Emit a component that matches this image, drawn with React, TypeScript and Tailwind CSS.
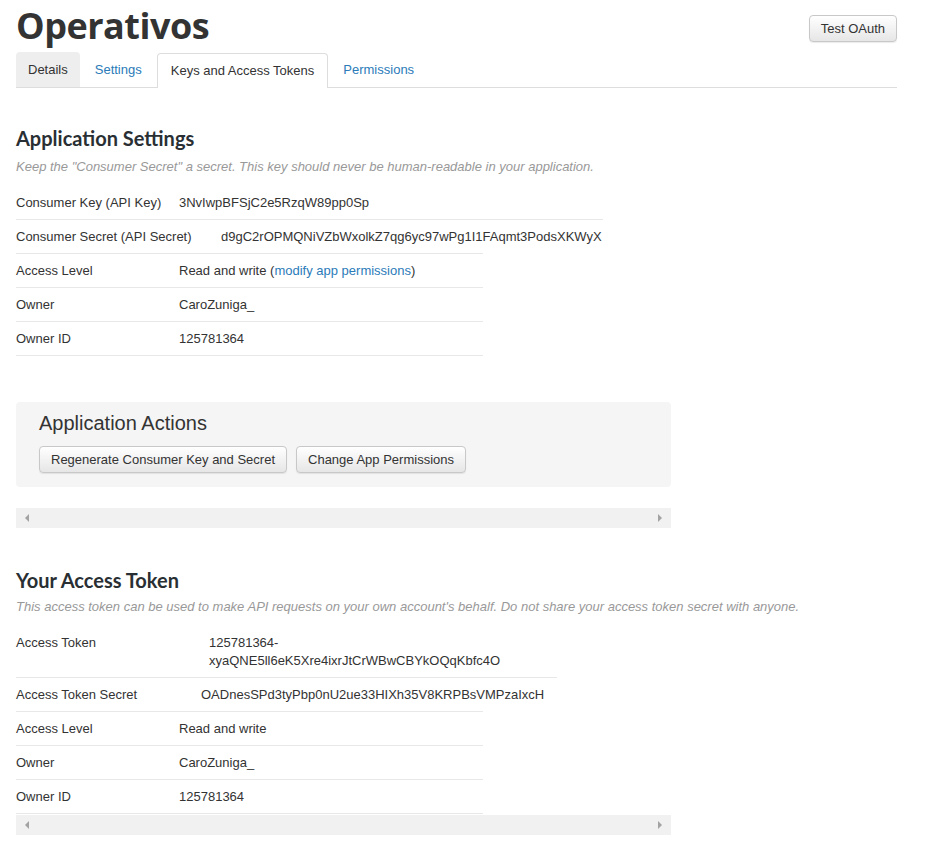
import React from 'react'

const body = "font-['Liberation_Sans',Arial,sans-serif]"

type Row = { label: string; value: React.ReactNode; labelW: number; lineW: number }

function InfoRow({ label, value, labelW, lineW, first }: Row & { first?: boolean }) {
  return (
    <div
      className={`flex items-start pb-[7px] pt-2 text-[13px] leading-[18px] text-[#333] ${first ? 'pb-2' : 'border-t border-[#e8e8e8]'}`}
      style={{ width: lineW }}
    >
      <div className="shrink-0" style={{ width: labelW }}>
        {label}
      </div>
      <div className="min-w-0">{value}</div>
    </div>
  )
}

function Scroller() {
  return (
    <div className="flex h-5 w-[655px] items-center justify-between bg-[#f1f1f1] px-2">
      <svg width="6" height="8" viewBox="0 0 6 8">
        <path d="M5 0 L1 4 L5 8 Z" fill="#a3a3a3" />
      </svg>
      <svg width="6" height="8" viewBox="0 0 6 8">
        <path d="M1 0 L5 4 L1 8 Z" fill="#a3a3a3" />
      </svg>
    </div>
  )
}

function Btn({ children }: { children: React.ReactNode }) {
  return (
    <button className="h-[27px] rounded-[4px] border border-[#c8c8c8] bg-gradient-to-b from-white to-[#e6e6e6] px-[11px] text-[13px] text-[#333] shadow-[0_1px_1px_rgba(0,0,0,0.08)]">
      {children}
    </button>
  )
}

export default function App() {
  const appRows: Row[] = [
    { label: 'Consumer Key (API Key)', value: '3NvIwpBFSjC2e5RzqW89pp0Sp', labelW: 163, lineW: 587 },
    {
      label: 'Consumer Secret (API Secret)',
      value: 'd9gC2rOPMQNiVZbWxolkZ7qg6yc97wPg1I1FAqmt3PodsXKWyX',
      labelW: 205,
      lineW: 587,
    },
    {
      label: 'Access Level',
      value: (
        <span>
          Read and write (<a href="#" className="text-[#2b7bb9]">modify app permissions</a>)
        </span>
      ),
      labelW: 163,
      lineW: 467,
    },
    { label: 'Owner', value: 'CaroZuniga_', labelW: 163, lineW: 467 },
    { label: 'Owner ID', value: '125781364', labelW: 163, lineW: 467 },
  ]

  const tokenRows: Row[] = [
    {
      label: 'Access Token',
      value: (
        <span>
          125781364-
          <br />
          xyaQNE5ll6eK5Xre4ixrJtCrWBwCBYkOQqKbfc4O
        </span>
      ),
      labelW: 193,
      lineW: 541,
    },
    {
      label: 'Access Token Secret',
      value: 'OADnesSPd3tyPbp0nU2ue33HIXh35V8KRPBsVMPzaIxcH',
      labelW: 185,
      lineW: 541,
    },
    { label: 'Access Level', value: 'Read and write', labelW: 163, lineW: 467 },
    { label: 'Owner', value: 'CaroZuniga_', labelW: 163, lineW: 467 },
    { label: 'Owner ID', value: '125781364', labelW: 163, lineW: 467 },
  ]

  return (
    <div className={`min-h-[859px] w-[933px] bg-white pl-4 ${body}`}>
      <div className="w-[881px]">
        {/* Header */}
        <div className="flex h-[53px] items-start justify-between">
          <h1 className="mt-[2px] font-['Open_Sans',sans-serif] text-[36px] font-bold leading-[48px] tracking-[-0.5px] text-[#333]">
            Operativos
          </h1>
          <div className="mt-[15px]">
            <Btn>Test OAuth</Btn>
          </div>
        </div>

        {/* Tabs */}
        <div className="flex h-[35px] items-end border-b border-[#ddd] text-[13px]">
          <a href="#" className="flex h-[35px] items-center rounded-t-[4px] bg-[#eee] px-3 text-[#333]">
            Details
          </a>
          <a href="#" className="ml-[3px] flex h-[35px] items-center px-3 text-[#2b7bb9]">
            Settings
          </a>
          <a
            href="#"
            className="-mb-px ml-[3px] flex h-[35px] items-center rounded-t-[4px] border border-b-0 border-[#ddd] bg-white px-[13px] text-[#333]"
          >
            Keys and Access Tokens
          </a>
          <a href="#" className="ml-[3px] flex h-[35px] items-center px-3 text-[#2b7bb9]">
            Permissions
          </a>
        </div>

        {/* Application Settings */}
        <h2 className="mt-[38px] font-['Lato',sans-serif] text-[20px] font-bold leading-[24px] text-[#292f33]">
          Application Settings
        </h2>
        <p className="mt-[8px] text-[13px] italic leading-[18px] text-[#999]">
          Keep the "Consumer Secret" a secret. This key should never be human-readable in your application.
        </p>
        <div className="mt-[10px]">
          {appRows.map((r, i) => (
            <InfoRow key={r.label} {...r} first={i === 0} />
          ))}
          <div className="h-px w-[467px] bg-[#e8e8e8]" />
        </div>

        {/* Application Actions */}
        <div className="mt-[46px] w-[655px] rounded-[4px] bg-[#f5f5f5] px-[23px] pb-[14px] pt-[9px]">
          <h3 className="text-[20px] leading-[24px] text-[#333]">Application Actions</h3>
          <div className="mt-[11px] flex gap-[9px]">
            <Btn>Regenerate Consumer Key and Secret</Btn>
            <Btn>Change App Permissions</Btn>
          </div>
        </div>
        <div className="mt-[21px]">
          <Scroller />
        </div>

        {/* Your Access Token */}
        <h2 className="mt-[40px] font-['Lato',sans-serif] text-[20px] font-bold leading-[24px] text-[#292f33]">
          Your Access Token
        </h2>
        <p className="mt-[6px] text-[13px] italic leading-[18px] text-[#999]">
          This access token can be used to make API requests on your own account's behalf. Do not share your access
          token secret with anyone.
        </p>
        <div className="mt-[10px]">
          {tokenRows.map((r, i) => (
            <InfoRow key={r.label} {...r} first={i === 0} />
          ))}
          <div className="h-px w-[467px] bg-[#e8e8e8]" />
        </div>
        <div className="mt-[1px]">
          <Scroller />
        </div>
      </div>
    </div>
  )
}
